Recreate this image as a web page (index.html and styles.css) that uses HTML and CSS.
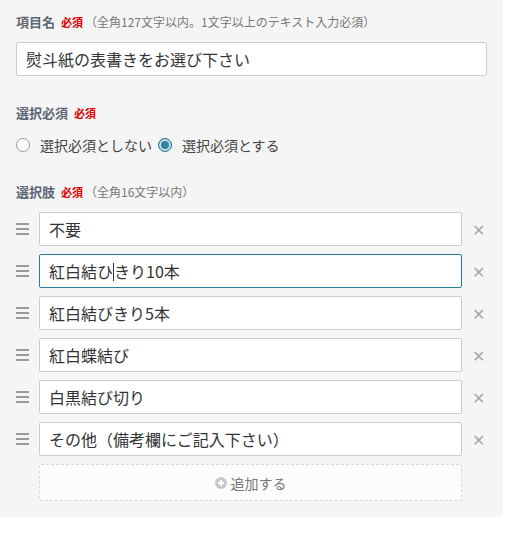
FILE: index.html
```html
<!DOCTYPE html>
<html lang="ja">
<head>
<meta charset="utf-8">
<link rel="stylesheet" href="styles.css">
</head>
<body>
<div class="panel">
  <div class="field">
    <div class="label"><span class="name">項目名</span><span class="req">必須</span><span class="note">（全角127文字以内。1文字以上のテキスト入力必須）</span></div>
    <div class="input">熨斗紙の表書きをお選び下さい</div>
  </div>

  <div class="field">
    <div class="label"><span class="name">選択必須</span><span class="req">必須</span></div>
    <div class="radios">
      <label class="radio"><span class="circle"></span>選択必須としない</label>
      <label class="radio"><span class="circle checked"></span>選択必須とする</label>
    </div>
  </div>

  <div class="field">
    <div class="label"><span class="name">選択肢</span><span class="req">必須</span><span class="note">（全角16文字以内）</span></div>
    <div class="items">
      <div class="item"><span class="handle"><i></i><i></i><i></i></span><div class="input">不要</div><span class="del">✕</span></div>
      <div class="item"><span class="handle"><i></i><i></i><i></i></span><div class="input focus">紅白結ひ<span class="caret"></span>きり10本</div><span class="del">✕</span></div>
      <div class="item"><span class="handle"><i></i><i></i><i></i></span><div class="input">紅白結びきり5本</div><span class="del">✕</span></div>
      <div class="item"><span class="handle"><i></i><i></i><i></i></span><div class="input">紅白蝶結び</div><span class="del">✕</span></div>
      <div class="item"><span class="handle"><i></i><i></i><i></i></span><div class="input">白黒結び切り</div><span class="del">✕</span></div>
      <div class="item"><span class="handle"><i></i><i></i><i></i></span><div class="input">その他（備考欄にご記入下さい）</div><span class="del">✕</span></div>
      <div class="add-row"><div class="add"><span class="plus"></span>追加する</div></div>
    </div>
  </div>
</div>
</body>
</html>
```

FILE: styles.css
```css
* { box-sizing: border-box; }
body {
  margin: 0;
  background: #fff;
  font-family: "Noto Sans CJK JP", "Noto Sans", sans-serif;
  color: #333;
}
.panel {
  width: 503px;
  background: #f5f5f5;
  padding: 12px 16px 16px 16px;
  border-radius: 0 0 5px 0;
  display: flex;
  flex-direction: column;
  gap: 27px;
}
.field { display: flex; flex-direction: column; }
.label {
  height: 20px;
  line-height: 20px;
  display: flex;
  align-items: center;
  white-space: nowrap;
}
.name {
  font-size: 13px;
  font-weight: bold;
  color: #5d6673;
}
.req {
  font-size: 11px;
  font-weight: bold;
  color: #e00000;
  margin-left: 6px;
}
.note {
  font-size: 12px;
  color: #777;
  margin-left: 2px;
}
.field > .input { margin-top: 10px; }
.input {
  height: 34px;
  background: #fff;
  border: 1px solid #ccc;
  border-radius: 2px;
  padding: 0 9px;
  font-size: 16px;
  line-height: 32px;
  color: #333;
  white-space: nowrap;
}
.input.focus { border-color: #2a7b99; }
.caret {
  display: inline-block;
  width: 1px;
  height: 18px;
  background: #333;
  vertical-align: -3px;
}
.radios {
  margin-top: 12px;
  height: 20px;
  display: flex;
  align-items: center;
  gap: 6px;
}
.radio {
  display: flex;
  align-items: center;
  font-size: 14px;
  color: #444;
}
.circle {
  width: 14px;
  height: 14px;
  border: 1px solid #999;
  border-radius: 50%;
  background: #fff;
  margin-right: 10px;
}
.circle.checked {
  border: 1px solid #2a7b99;
  background: #2f86a5;
  box-shadow: inset 0 0 0 2px #cfe3ea;
}
.items {
  margin-top: 10px;
  display: flex;
  flex-direction: column;
  gap: 8px;
}
.item {
  display: flex;
  align-items: center;
}
.handle {
  width: 23px;
  display: flex;
  flex-direction: column;
  gap: 3px;
}
.handle i {
  display: block;
  width: 13px;
  height: 2px;
  background: #9a9a9a;
}
.item .input { width: 423px; }
.del {
  flex: 1;
  text-align: right;
  padding-right: 2px;
  font-size: 16px;
  color: #a8a8a8;
}
.add-row { padding-left: 23px; }
.add {
  width: 423px;
  height: 37px;
  border: 1px dashed #d8d8d8;
  border-radius: 2px;
  background: #fcfcfc;
  display: flex;
  align-items: center;
  justify-content: center;
  font-size: 14px;
  color: #777;
}
.plus {
  width: 12px;
  height: 12px;
  border-radius: 50%;
  background: #c8c8c8;
  margin-right: 4px;
  position: relative;
}
.plus::before, .plus::after {
  content: "";
  position: absolute;
  background: #fff;
  left: 50%;
  top: 50%;
  transform: translate(-50%, -50%);
}
.plus::before { width: 6px; height: 2px; }
.plus::after { width: 2px; height: 6px; }
```
